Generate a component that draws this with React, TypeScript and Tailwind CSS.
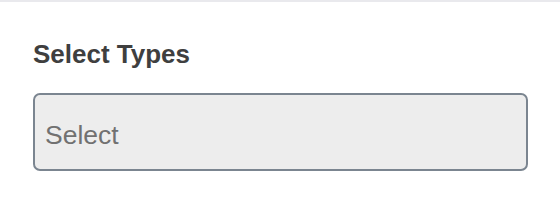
export default function App() {
  return (
    <div className="w-[560px] h-[204px] bg-white border-t-2 border-[#e9e9ed] font-['Liberation_Sans',Arial,sans-serif]">
      <div className="pt-[39px] pl-[33px]">
        <label className="block text-[26px] leading-[26px] font-bold text-[#3f3f3f]">Select Types</label>
        <div className="mt-[26px] w-[495px] h-[78px] rounded-[7px] border-2 border-[#7b8590] bg-[#ededed] flex items-center pl-[10px] pt-[5px]">
          <span className="text-[26.5px] leading-[26px] text-[#717171]">Select</span>
        </div>
      </div>
    </div>
  );
}
